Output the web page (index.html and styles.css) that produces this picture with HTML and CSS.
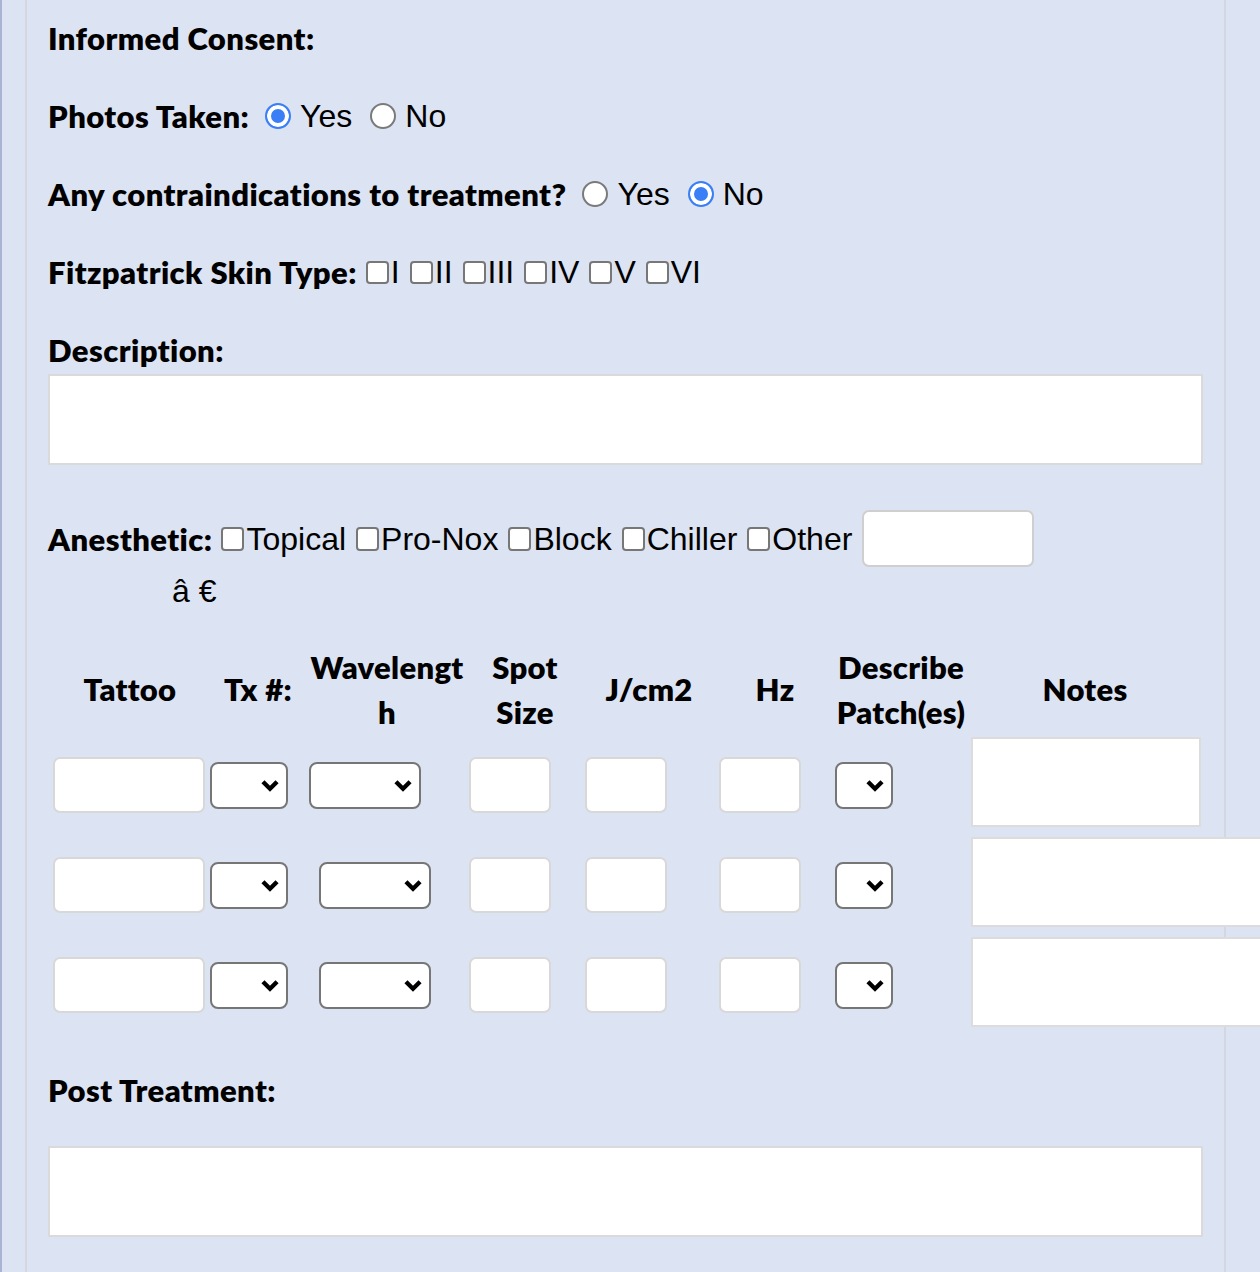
FILE: index.html
```html
<!DOCTYPE html>
<html lang="en">
<head>
<meta charset="utf-8">
<title>Treatment Record</title>
<link rel="stylesheet" href="styles.css">
</head>
<body>
<div class="frame">
  <div class="panel">
    <div class="row first-row"><span class="lbl">Informed Consent:</span></div>

    <div class="row"><span class="lbl">Photos Taken:</span><input type="radio" class="radio lead" name="photos" checked><span class="opt">Yes</span><input type="radio" class="radio" name="photos"><span class="opt">No</span></div>

    <div class="row"><span class="lbl">Any contraindications to treatment?</span><input type="radio" class="radio lead" name="contra"><span class="opt">Yes</span><input type="radio" class="radio" name="contra" checked><span class="opt">No</span></div>

    <div class="row"><span class="lbl">Fitzpatrick Skin Type:</span><input type="checkbox" class="cb lead"><span class="opt">I</span><input type="checkbox" class="cb"><span class="opt">II</span><input type="checkbox" class="cb"><span class="opt">III</span><input type="checkbox" class="cb"><span class="opt">IV</span><input type="checkbox" class="cb"><span class="opt">V</span><input type="checkbox" class="cb"><span class="opt">VI</span></div>

    <div class="row"><span class="lbl">Description:</span></div>
    <textarea class="area desc"></textarea>

    <div class="row anes"><span class="lbl">Anesthetic:</span><input type="checkbox" class="cb lead"><span class="opt">Topical</span><input type="checkbox" class="cb"><span class="opt">Pro-Nox</span><input type="checkbox" class="cb"><span class="opt">Block</span><input type="checkbox" class="cb"><span class="opt">Chiller</span><input type="checkbox" class="cb"><span class="opt">Other</span><input type="text" class="other"></div>
    <div class="odd">â €</div>

    <div class="thead">
      <div>Tattoo</div>
      <div>Tx #:</div>
      <div>Wavelengt<br>h</div>
      <div>Spot<br>Size</div>
      <div>J/cm2</div>
      <div>Hz</div>
      <div>Describe<br>Patch(es)</div>
      <div>Notes</div>
    </div>

    <div class="trow r1">
      <input type="text" class="in tattoo">
      <span class="sel tx"><select><option></option></select><svg viewBox="0 0 18 12"><polyline points="2.5,2.5 9,9 15.5,2.5"/></svg></span>
      <span class="sel wave"><select><option></option></select><svg viewBox="0 0 18 12"><polyline points="2.5,2.5 9,9 15.5,2.5"/></svg></span>
      <input type="text" class="in spot">
      <input type="text" class="in jcm">
      <input type="text" class="in hz">
      <span class="sel patch"><select><option></option></select><svg viewBox="0 0 18 12"><polyline points="2.5,2.5 9,9 15.5,2.5"/></svg></span>
      <textarea class="notes"></textarea>
    </div>
    <div class="trow">
      <input type="text" class="in tattoo">
      <span class="sel tx"><select><option></option></select><svg viewBox="0 0 18 12"><polyline points="2.5,2.5 9,9 15.5,2.5"/></svg></span>
      <span class="sel wave"><select><option></option></select><svg viewBox="0 0 18 12"><polyline points="2.5,2.5 9,9 15.5,2.5"/></svg></span>
      <input type="text" class="in spot">
      <input type="text" class="in jcm">
      <input type="text" class="in hz">
      <span class="sel patch"><select><option></option></select><svg viewBox="0 0 18 12"><polyline points="2.5,2.5 9,9 15.5,2.5"/></svg></span>
      <textarea class="notes"></textarea>
    </div>
    <div class="trow">
      <input type="text" class="in tattoo">
      <span class="sel tx"><select><option></option></select><svg viewBox="0 0 18 12"><polyline points="2.5,2.5 9,9 15.5,2.5"/></svg></span>
      <span class="sel wave"><select><option></option></select><svg viewBox="0 0 18 12"><polyline points="2.5,2.5 9,9 15.5,2.5"/></svg></span>
      <input type="text" class="in spot">
      <input type="text" class="in jcm">
      <input type="text" class="in hz">
      <span class="sel patch"><select><option></option></select><svg viewBox="0 0 18 12"><polyline points="2.5,2.5 9,9 15.5,2.5"/></svg></span>
      <textarea class="notes"></textarea>
    </div>

    <div class="row post"><span class="lbl">Post Treatment:</span></div>
    <textarea class="area post-area"></textarea>
  </div>
</div>
</body>
</html>
```

FILE: styles.css
```css
html {
  overflow: hidden;
}
body {
  margin: 0;
  background: #dce3f2;
  font-family: "Liberation Sans", Arial, sans-serif;
  color: #000;
}
.frame {
  width: 1250px;
  min-height: 1272px;
  border-left: 2px solid #a9b4d2;
  border-right: 2px solid #a9b4d2;
  padding-left: 23px;
  box-sizing: content-box;
}
.panel {
  width: 1155px;
  min-height: 1272px;
  border-left: 2px solid #d4d7df;
  border-right: 2px solid #d4d7df;
  padding: 0 21px;
}
.row {
  display: flex;
  align-items: center;
  height: 48px;
  margin-top: 30px;
  white-space: nowrap;
}
.row.first-row {
  margin-top: 0;
  padding-top: 14px;
}
.lbl {
  font-family: Lato, "Liberation Sans", sans-serif;
  font-weight: 800;
  font-size: 31px;
  letter-spacing: 0.42px;
  line-height: 48px;
}
.opt {
  font-size: 32px;
  line-height: 48px;
}
.radio {
  appearance: none;
  -webkit-appearance: none;
  flex: none;
  width: 26px;
  height: 26px;
  box-sizing: border-box;
  border-radius: 50%;
  border: 2px solid #7a7a7a;
  background: #fff;
  margin: 0 9px 0 18px;
}
.radio.lead {
  margin-left: 16px;
}
.radio:checked {
  border-color: #3a7ff6;
  background: #3a7ff6;
  box-shadow: inset 0 0 0 4px #fff;
}
.cb {
  appearance: none;
  -webkit-appearance: none;
  flex: none;
  width: 23px;
  height: 23px;
  box-sizing: border-box;
  border: 2px solid #777;
  border-radius: 4px;
  background: #fff;
  margin: 0 2px 0 10px;
}
.cb.lead {
  margin-left: 9px;
}
.area {
  display: block;
  box-sizing: border-box;
  width: 1155px;
  height: 91px;
  border: 2px solid #dadada;
  background: #fff;
  margin: 0;
  padding: 0;
  resize: none;
  outline: none;
}
.row.anes {
  height: 57px;
  margin-top: 45px;
}
.row.anes .cb {
  height: 24px;
}
.other {
  flex: none;
  box-sizing: border-box;
  width: 172px;
  height: 57px;
  margin-left: 10px;
  border: 2px solid #cfcfcf;
  border-radius: 7px;
  background: #fff;
  outline: none;
}
.odd {
  font-size: 32px;
  line-height: 48px;
  padding-left: 124px;
}
.thead {
  display: grid;
  grid-template-columns: 164px 92px 166px 110px 138px 114px 138px 230px;
  height: 95px;
  margin-top: 27px;
  align-items: center;
  text-align: center;
  font-family: Lato, "Liberation Sans", sans-serif;
  font-weight: 800;
  font-size: 31px;
  letter-spacing: 0.3px;
  line-height: 45px;
  white-space: nowrap;
}
.trow {
  display: flex;
  align-items: flex-start;
  height: 100px;
}
.trow > * {
  flex: none;
}
.in {
  box-sizing: border-box;
  height: 56px;
  margin-top: 20px;
  border: 2px solid #d8d8d8;
  border-radius: 7px;
  background: #fff;
  padding: 0;
  outline: none;
}
.tattoo { width: 152px; margin-left: 5px; }
.spot { width: 82px; margin-left: 38px; }
.jcm { width: 82px; margin-left: 34px; }
.hz { width: 82px; margin-left: 52px; }
.r1 .spot { margin-left: 48px; }
.sel {
  display: grid;
  margin-top: 25px;
}
.sel select {
  grid-area: 1 / 1;
  appearance: none;
  -webkit-appearance: none;
  box-sizing: border-box;
  width: 100%;
  height: 47px;
  border: 2px solid #767676;
  border-radius: 8px;
  background: #fff;
  margin: 0;
  outline: none;
}
.sel svg {
  grid-area: 1 / 1;
  justify-self: end;
  align-self: center;
  width: 20px;
  height: 13px;
  margin-right: 8px;
  fill: none;
  stroke: #000;
  stroke-width: 4;
  pointer-events: none;
}
.tx { width: 78px; margin-left: 5px; }
.wave { width: 112px; margin-left: 31px; }
.r1 .wave { margin-left: 21px; }
.patch { width: 58px; margin-left: 34px; }
.notes {
  box-sizing: border-box;
  width: 300px;
  height: 90px;
  margin: 0 0 0 78px;
  border: 2px solid #dcdcdc;
  background: #fff;
  padding: 0;
  resize: none;
  outline: none;
}
.r1 .notes { width: 230px; }
.row.post {
  margin-top: 29px;
}
.post-area {
  margin-top: 32px;
}
```
